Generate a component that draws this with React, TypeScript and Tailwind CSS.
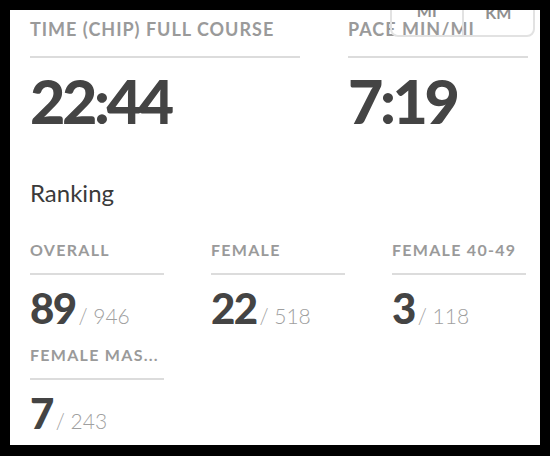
const font = { fontFamily: 'Lato, "Open Sans", sans-serif' };

interface Rank {
  label: string;
  place: number;
  total: number;
}

const ranks: Rank[] = [
  { label: 'OVERALL', place: 89, total: 946 },
  { label: 'FEMALE', place: 22, total: 518 },
  { label: 'FEMALE 40-49', place: 3, total: 118 },
  { label: 'FEMALE MAS...', place: 7, total: 243 },
];

function StatLabel({ children }: { children: React.ReactNode }) {
  return (
    <div className="border-b-2 border-[#dcdcdc] pb-[16px] text-[18px] leading-[22px] font-bold tracking-[0.055em] text-[#9a9a9a] whitespace-nowrap">
      {children}
    </div>
  );
}

function RankLabel({ children }: { children: React.ReactNode }) {
  return (
    <div className="border-b-2 border-[#dcdcdc] pb-[13px] text-[16px] leading-[20px] font-bold tracking-[0.08em] text-[#9a9a9a] whitespace-nowrap">
      {children}
    </div>
  );
}

export default function App() {
  return (
    <div className="w-[550px] h-[456px] bg-black p-[10px] overflow-hidden" style={font}>
      <div className="relative w-[530px] h-[435px] bg-white pl-[20px] pt-[8px] overflow-hidden">
        {/* unit toggle, partly hidden above */}
        <div className="absolute right-[5px] top-[-20px] flex w-[145px] h-[47px] border-2 border-[#e2e2e2] rounded-[8px] text-[#8f8f8f] text-[16px] font-bold">
          <div className="flex-1 flex items-end justify-center pb-[12px] border-r-2 border-[#e2e2e2]">MI</div>
          <div className="flex-1 flex items-end justify-center pb-[10px]">KM</div>
        </div>

        {/* time / pace */}
        <div className="flex gap-[48px]">
          <div className="w-[270px]">
            <StatLabel>TIME (CHIP) FULL COURSE</StatLabel>
            <div className="mt-[11px] text-[61px] leading-[64px] font-black text-[#444] tracking-[-0.055em]">22:44</div>
          </div>
          <div className="w-[180px]">
            <StatLabel>PACE MIN/MI</StatLabel>
            <div className="mt-[11px] text-[61px] leading-[64px] font-black text-[#444] tracking-[-0.055em]">7:19</div>
          </div>
        </div>

        <div className="mt-[46px] text-[24px] leading-[28px] text-[#3a3a3a]">Ranking</div>

        {/* ranking grid */}
        <div className="mt-[33px] grid grid-cols-[134px_134px_134px] gap-x-[47px] gap-y-[13px]">
          {ranks.map(r => (
            <div key={r.label}>
              <RankLabel>{r.label}</RankLabel>
              <div className="mt-[10px] flex items-baseline">
                <span className="text-[42px] leading-[46px] font-black text-[#444] tracking-[-0.04em]">{r.place}</span>
                <span className="ml-[3px] text-[21px] font-light text-[#9f9f9f]">/ {r.total}</span>
              </div>
            </div>
          ))}
        </div>
      </div>
    </div>
  );
}
